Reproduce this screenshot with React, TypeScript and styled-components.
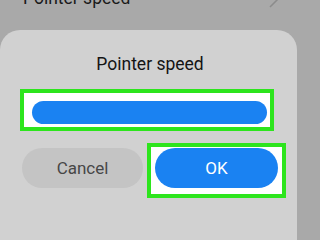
import React from "react";
import styled, { createGlobalStyle } from "styled-components";

const GlobalStyle = createGlobalStyle`
  html, body {
    margin: 0;
    padding: 0;
    height: 100%;
    overflow: hidden;
    background: #a9a9a9;
    font-family: Roboto, "Noto Sans", sans-serif;
  }
`;

const Screen = styled.div`
  display: flex;
  flex-direction: column;
  width: 300px;
  height: 100vh;
  min-height: 200px;
  overflow: hidden;
`;

const SettingRow = styled.div`
  display: flex;
  align-items: flex-start;
  justify-content: space-between;
  flex: none;
  height: 30px;
  padding: 0 20px 0 23px;
  box-sizing: border-box;
  overflow: hidden;
`;

const SettingLabel = styled.span`
  margin-top: -12px;
  font-size: 17.5px;
  line-height: 20px;
  color: #1a1a1a;
`;

const Chevron = styled.svg`
  margin-top: -11px;
  flex: none;
`;

const Dialog = styled.div`
  flex: 1;
  width: 297px;
  background: #d1d1d1;
  border-radius: 20px 20px 0 0;
  display: flex;
  flex-direction: column;
`;

const Title = styled.div`
  margin-top: 24px;
  text-align: center;
  font-size: 17.5px;
  line-height: 20px;
  color: #141414;
  padding-left: 3px;
`;

const Highlight = styled.div<{ $pad: string }>`
  box-sizing: border-box;
  border: 4px solid #2de51d;
  background: #ffffff;
  padding: ${p => p.$pad};
`;

const SliderBox = styled(Highlight)`
  margin: 15px 0 0 20px;
  width: 254px;
  height: 42px;
`;

const SliderTrack = styled.div`
  height: 23px;
  border-radius: 12px;
  background: #1a82f2;
`;

const Buttons = styled.div`
  display: flex;
  align-items: flex-start;
  gap: 4px;
  margin-top: 12px;
  padding-left: 22px;
`;

const OkBox = styled(Highlight)`
  width: 139px;
  height: 55px;
`;

const Button = styled.button<{ $primary?: boolean }>`
  display: flex;
  align-items: center;
  justify-content: center;
  height: 40px;
  border: none;
  border-radius: 20px;
  font-family: Roboto, "Noto Sans", sans-serif;
  font-size: 17px;
  padding: 0;
  background: ${p => (p.$primary ? "#1a82f2" : "#c4c4c4")};
  color: ${p => (p.$primary ? "#ffffff" : "#474747")};
`;

const CancelButton = styled(Button)`
  width: 121px;
  margin-top: 5px;
`;

const OkButton = styled(Button)`
  width: 123px;
`;

const App = () => {
  return <Screen>
    <GlobalStyle/>
    <SettingRow>
      <SettingLabel>Pointer speed</SettingLabel>
      <Chevron width="12" height="20" viewBox="0 0 12 20">
        <path d="M2 2 L10 10 L2 18" fill="none" stroke="#8c8c8c" strokeWidth="1.5"/>
      </Chevron>
    </SettingRow>
    <Dialog>
      <Title>Pointer speed</Title>
      <SliderBox $pad="8px 3px 3px 8px">
        <SliderTrack/>
      </SliderBox>
      <Buttons>
        <CancelButton>Cancel</CancelButton>
        <OkBox $pad="1px 4px 6px 4px">
          <OkButton $primary>OK</OkButton>
        </OkBox>
      </Buttons>
    </Dialog>
  </Screen>;
};

export default App;
